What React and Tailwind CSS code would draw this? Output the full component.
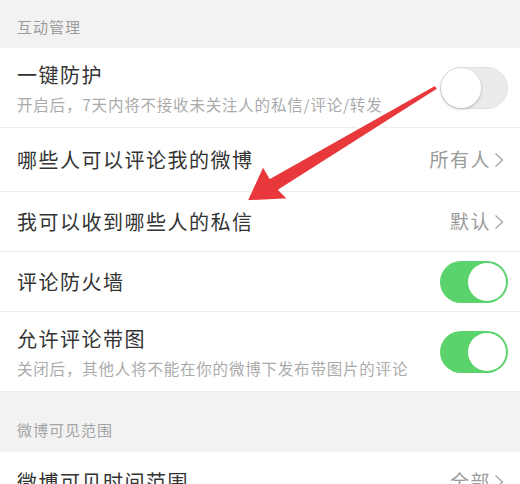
const font = { fontFamily: '"Noto Sans CJK SC", "Noto Sans", sans-serif' };

function Toggle({ on }) {
  return on ? (
    <div className="w-[68px] h-[42px] rounded-full bg-[#5ad36c] p-[2px] flex justify-end">
      <div className="w-[38px] h-[38px] rounded-full bg-white"></div>
    </div>
  ) : (
    <div className="w-[68px] h-[42px] rounded-full bg-[#ebebeb] border border-[#e2e2e2] flex items-center justify-start">
      <div className="w-[40px] h-[40px] rounded-full bg-white shadow-[0_1px_3px_rgba(0,0,0,0.25)]"></div>
    </div>
  );
}

function Value({ text }) {
  return (
    <div className="flex items-center gap-[3px] text-[19px] tracking-[1.5px] text-[#9a9a9a]">
      <span>{text}</span>
      <svg width="10" height="16" viewBox="0 0 10 16" fill="none">
        <path d="M1.5 1.5l7 6.5-7 6.5" stroke="#a8a8a8" strokeWidth="1.4" />
      </svg>
    </div>
  );
}

function Row({ title, sub, right, h }) {
  return (
    <div className={`flex items-center justify-between bg-white pl-[17px] pr-[16px] border-b border-[#ececec] ${h}`}>
      <div className="flex flex-col">
        <span className="text-[20px] tracking-[1.5px] text-[#333] leading-[28px]">{title}</span>
        {sub && <span className="text-[15.5px] tracking-[0.8px] text-[#ababab] leading-[20px] mt-[5px]">{sub}</span>}
      </div>
      {right}
    </div>
  );
}

export default function App() {
  return (
    <div className="relative w-[520px] h-[484px] overflow-hidden bg-[#f2f2f2]" style={font}>
      <div className="h-[48px] flex items-center pt-[6px] pl-[17px] text-[15px] tracking-[1px] text-[#9c9c9c]">互动管理</div>
      <Row h="h-[80px]" title="一键防护" sub="开启后，7天内将不接收未关注人的私信/评论/转发" right={<div className="-mr-[4px]"><Toggle on={false} /></div>} />
      <Row h="h-[64px]" title="哪些人可以评论我的微博" right={<Value text="所有人" />} />
      <Row h="h-[60px]" title="我可以收到哪些人的私信" right={<Value text="默认" />} />
      <Row h="h-[60px]" title="评论防火墙" right={<div className="-mr-[4px]"><Toggle on /></div>} />
      <Row h="h-[80px]" title="允许评论带图" sub="关闭后，其他人将不能在你的微博下发布带图片的评论" right={<div className="-mr-[4px]"><Toggle on /></div>} />
      <div className="h-[60px] flex items-center pt-[16px] pl-[17px] text-[15px] tracking-[1px] text-[#a4a4a4]">微博可见范围</div>
      <Row h="h-[60px]" title="微博可见时间范围" right={<Value text="全部" />} />

      {/* red annotation arrow */}
      <svg className="absolute left-0 top-0" width="520" height="484" viewBox="0 0 520 484">
        <polygon
          points="247,201 263,166 270,178 435,85 438,89 279,190 288,199"
          fill="#e8383c"
          stroke="#ffffff"
          strokeWidth="1.5"
          strokeLinejoin="round"
        />
      </svg>
    </div>
  );
}
